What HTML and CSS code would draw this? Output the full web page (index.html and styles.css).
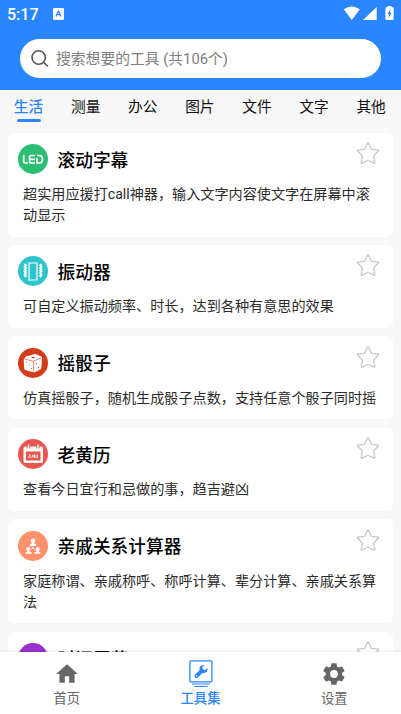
FILE: index.html
```html
<!DOCTYPE html>
<html lang="zh-CN">
<head>
<meta charset="utf-8">
<meta name="viewport" content="width=device-width, initial-scale=1">
<title>工具集</title>
<link rel="stylesheet" href="styles.css">
</head>
<body>
<svg class="defs" width="0" height="0"><defs>
<symbol id="star" viewBox="0 0 24 24"><path d="M11.500 2.200q.5-.9 1 0l2.700 5.700q.2.400.7.500l6.100.7q.9.200.3.900l-4.500 4.700q-.3.300-.2.800l1.200 6.100q0 .9-.8.500L12.500 19.500q-.5-.3-1 0L6 22.100q-.8.400-.8-.5l1.200-6.100q.1-.5-.2-.8L1.700 10q-.6-.7.300-.9l6.100-.7q.5-.1.700-.5Z" fill="none" stroke="#c8c8c8" stroke-width="1.300" stroke-linejoin="round"/></symbol>
</defs></svg>
<div class="app">
<header class="header">
<div class="status">
<span class="time">5:17</span>
<svg class="keyboard" viewBox="0 0 11 12"><rect width="11" height="12" rx="1.300" fill="#fff"/><path d="M3 8.500 5.300 3h.4L8 8.500M3.900 6.700h3.200" fill="none" stroke="#2a86ff" stroke-width="1.200"/></svg>
<svg class="signals" viewBox="0 0 52 16"><path d="M.8 3.200Q8.800-2.200 16.800 3.200L8.800 14ZM33.700 1v13H20ZM44.500 1.300V0h4v1.300h1.300q.9 0 .9.900v11q0 .8-.9.800h-6.600q-.8 0-.8-.8v-11q0-.9.800-.9Z" fill="#fff"/><path d="m47.500 3-3 5h1.700l-.6 4 3-5.200h-1.700l.6-3.800Z" fill="#2a86ff"/></svg>
</div>
<div class="search">
<svg class="search-icon" viewBox="0 0 18 18"><circle cx="7.700" cy="7.500" r="6.700"/><path d="m12.400 12.200 4.500 4.300"/></svg>
<span>搜索想要的工具 (共106个)</span>
</div>
</header>
<nav class="tabs"><span class="active">生活</span><span>测量</span><span>办公</span><span>图片</span><span>文件</span><span>文字</span><span>其他</span></nav>
<main class="list">
<article class="card tall">
<div class="card-head"><svg class="icon" viewBox="0 0 30 30"><circle cx="15" cy="15" r="15" fill="#2dbe74"/><path d="M5.700 11v6.500q0 1.500 1.500 1.500H10M17 11.500h-3.500q-2 0-2 1.800v3.900q0 1.800 2 1.800H17m-5.500-3.700H17M19 14v5h2.500q3 0 3-3.700t-3-3.800H19" fill="none" stroke="#fff" stroke-width="1.700"/></svg><h2>滚动字幕</h2><svg class="star"><use href="#star"/></svg></div>
<p>超实用应援打call神器，输入文字内容使文字在屏幕中滚动显示</p>
</article>
<article class="card">
<div class="card-head"><svg class="icon" viewBox="0 0 30 30"><circle cx="15" cy="15" r="15" fill="#2fc4cd"/><g fill="none" stroke="#fff"><path d="M11 7h8v17h-8Z" stroke-width="1.200"/><path d="m6.500 8 1.500 1.300-1.500 1.300L8 11.900l-1.500 1.300L8 14.500l-1.500 1.300L8 17.100l-1.500 1.300L8 19.700 6.500 21M23.500 8 22 9.300l1.500 1.300-1.500 1.300 1.500 1.300-1.500 1.300 1.500 1.300-1.500 1.300 1.500 1.300-1.500 1.300 1.500 1.300" stroke-width="1.700"/></g></svg><h2>振动器</h2><svg class="star"><use href="#star"/></svg></div>
<p>可自定义振动频率、时长，达到各种有意思的效果</p>
</article>
<article class="card">
<div class="card-head"><svg class="icon" viewBox="0 0 30 30"><circle cx="15" cy="15" r="15" fill="#d33b1b"/><path d="M7 10q0-1 1-1.400l8-2.400q1-.3 2 .1l5.200 2.200q1 .5.900 1.500l-.8 10q-.1 1-1 1.500l-5 2.500q-.8.500-1.800.200L7.200 22q-.9-.3-1-1.300L5.700 12q0-1 1.300-2Z" fill="#fff"/><g fill="none" stroke="#d33b1b" stroke-width=".6"><path d="m7 11 8.500 2.300L23 9.800M15.500 13.300l.3 10.200"/></g><g fill="#d33b1b"><ellipse cx="15" cy="9.500" rx="1.700" ry=".7"/><circle cx="8.500" cy="14" r=".6"/><circle cx="11" cy="17" r=".6"/><circle cx="13.500" cy="20.500" r=".6"/><circle cx="18.500" cy="16" r=".7"/><circle cx="20.500" cy="19.500" r=".7"/></g></svg><h2>摇骰子</h2><svg class="star"><use href="#star"/></svg></div>
<p>仿真摇骰子，随机生成骰子点数，支持任意个骰子同时摇</p>
</article>
<article class="card">
<div class="card-head"><svg class="icon" viewBox="0 0 30 30"><circle cx="15" cy="15" r="15" fill="#e8574f"/><rect x="5.500" y="7.500" width="19.500" height="16.500" rx="2" fill="#fff"/><path d="M10.500 6v3.500M20 6v3.500" stroke="#e8574f" stroke-width="3.400"/><path d="M10.500 6v3.500M20 6v3.500" stroke="#fff" stroke-width="1.500" stroke-linecap="round"/><rect x="8" y="12.500" width="14.500" height="9" rx=".5" fill="#e8574f"/><path d="m10 19 2-3.500v3.700m1.500-.2 1.500-3 1.500 3v-3.500m1.500 0V19m1.500-3.500V19" fill="none" stroke="#fff" stroke-width=".8"/></svg><h2>老黄历</h2><svg class="star"><use href="#star"/></svg></div>
<p>查看今日宜行和忌做的事，趋吉避凶</p>
</article>
<article class="card tall">
<div class="card-head"><svg class="icon" viewBox="0 0 30 30"><circle cx="15" cy="15" r="15" fill="#ff916c"/><g fill="#fff"><circle cx="15" cy="9.800" r="2.300"/><path d="M14 11h2v1.300l2 1v1.700h-6v-1.700l2-1Z"/><circle cx="10.300" cy="18" r="2"/><path d="M9.500 19.500h1.600v.8l2.400 1v1.500H7.800v-1.500l1.700-.9Z"/><circle cx="19.700" cy="18" r="2"/><path d="M18.900 19.500h1.600v.8l1.700 1v1.500h-5.700v-1.500l2.400-.9Z"/></g><path d="M15 15.500v1.700l-1.700 1m1.700-1 1.700 1" stroke="#fff" fill="none"/></svg><h2>亲戚关系计算器</h2><svg class="star"><use href="#star"/></svg></div>
<p>家庭称谓、亲戚称呼、称呼计算、辈分计算、亲戚关系算法</p>
</article>
<article class="card">
<div class="card-head"><svg class="icon" viewBox="0 0 30 30"><circle cx="15" cy="15" r="15" fill="#9a30d0"/></svg><h2>时间屏幕</h2><svg class="star"><use href="#star"/></svg></div>
</article>
</main>
<footer class="nav">
<div class="item"><svg viewBox="0 0 24 24"><path d="M10 20v-6h4v6h5v-8h3L12 3 2 12h3v8Z" fill="#666"/></svg><span>首页</span></div>
<div class="item selected"><svg class="tools" viewBox="0 0 24 28"><g fill="none" stroke="#2a86ff"><rect x=".9" y=".9" width="22" height="21" rx="1" stroke-width="1.300"/><path d="M3 24h18M5.500 26.500h13" stroke-width="1.200"/></g><path d="m7.500 16.200 5.500-5.500" stroke="#2a86ff" stroke-width="4" stroke-linecap="round"/><path d="M15.500 5.300q-4-.8-5 2.700-.5 3 2 4.800 3 1.300 5.300-1 1-1.500.6-3.800L16 10.200l-2.300-.5-.5-2.200Z" fill="#2a86ff"/><circle cx="7.700" cy="16" r=".7" fill="#fff"/></svg><span>工具集</span></div>
<div class="item"><svg viewBox="0 0 24 24"><path d="M19.400 13c0-.3.100-.6.100-1s0-.7-.1-1l2.100-1.600c.2-.2.300-.4.100-.7l-2-3.400c-.1-.2-.4-.3-.6-.2l-2.500 1c-.5-.4-1.100-.7-1.700-1l-.4-2.600c0-.3-.2-.5-.4-.5h-4c-.3 0-.5.200-.5.500l-.4 2.600c-.6.300-1.200.6-1.700 1l-2.500-1c-.2-.1-.5 0-.6.200l-2 3.400c-.1.300-.1.500.1.700L4.500 11v2l-2.100 1.600c-.2.200-.2.400-.1.700l2 3.400c.1.200.4.300.6.200l2.500-1c.5.400 1.100.7 1.700 1l.4 2.600c0 .3.200.5.500.5h4c.2 0 .4-.2.400-.5l.4-2.600c.6-.3 1.200-.6 1.700-1l2.500 1c.2.100.5 0 .6-.2l2-3.400c.2-.3.100-.5-.1-.7ZM12 15.600a3.600 3.600 0 1 1 0-7.200 3.600 3.600 0 0 1 0 7.200Z" fill="#666"/></svg><span>设置</span></div>
</footer>
</div>
</body>
</html>
```
FILE: styles.css
```css
* { box-sizing: border-box; }
body { margin: 0; font-family: Roboto, "Noto Sans CJK SC", sans-serif; }
svg { display: block; flex: none; }
.defs { position: absolute; }
.app { height: 714px; display: flex; flex-direction: column; overflow: hidden; background: #f7f7f7; }
.header { flex: none; height: 90px; background: #2a86ff; }
.status { height: 39px; padding: 0 6px 10px 7px; display: flex; align-items: center; color: #fff; }
.time { font-size: 16px; font-weight: 500; line-height: 20px; }
.keyboard { width: 11px; height: 12px; margin-left: 14px; margin-top: -1px; }
.signals { width: 52px; height: 16px; margin-left: auto; margin-top: -2px; }
.search { height: 39px; margin: 0 20px; padding: 0 11px; border-radius: 20px; background: #fff; display: flex; align-items: center; gap: 7px; font-size: 14.800px; color: #808080; white-space: nowrap; }
.search span { padding-bottom: 2px; }
.search-icon { width: 18px; height: 18px; fill: none; stroke: #555; stroke-width: 1.600; }
.tabs { flex: none; height: 42.500px; display: flex; }
.tabs span { flex: 0 0 57.100px; display: flex; flex-direction: column; align-items: center; font-size: 14.700px; line-height: 35px; color: #111; }
.tabs .active { color: #2a86ff; font-weight: 500; }
.tabs .active::after { content: ""; width: 24px; height: 3px; margin-top: -6px; border-radius: 2px; background: #2a86ff; }
.list { flex: 1; min-height: 0; overflow: hidden; padding: 0 8px; display: flex; flex-direction: column; gap: 8.300px; }
.card { flex: none; height: 83.200px; padding: 8.600px 13px 0 10px; border-radius: 6px; background: #fff; }
.tall { height: 104px; }
.card-head { height: 36px; display: flex; align-items: center; }
.icon { width: 30px; height: 30px; }
h2 { flex: 1; margin: 0 0 0 9.500px; padding-top: 3px; font-size: 17.700px; line-height: 24px; font-weight: 500; color: #000; }
.star { width: 24px; height: 24px; align-self: flex-start; }
.card p { margin: 7px 0 0 5px; width: 356px; font-size: 14.130px; line-height: 20.700px; color: #2b2b2b; }
.nav { flex: none; height: 62px; display: flex; background: #fff; box-shadow: 0 -1px 2px #0001; position: relative; }
.item { flex: 1; display: flex; flex-direction: column; align-items: center; padding-top: 9px; font-size: 13.300px; line-height: 20px; color: #666; }
.item span { padding-top: 1px; }
.item svg { width: 26px; height: 26px; margin-bottom: 1px; }
.item .tools { width: 24px; height: 28px; margin-top: -1px; margin-bottom: 0; }
.selected { color: #2a86ff; font-weight: 500; }
```
